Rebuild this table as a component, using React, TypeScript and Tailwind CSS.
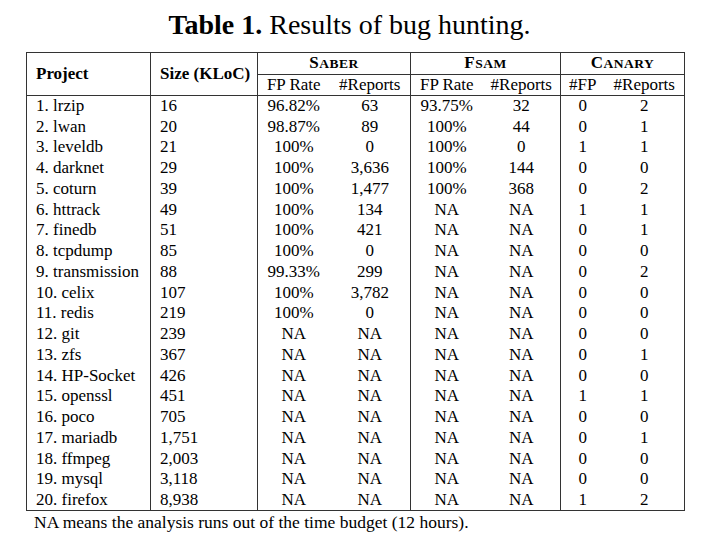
import React from "react";

type Row = [string, string, string, string, string, string, string, string];

const rows: Row[] = [
  ["1. lrzip", "16", "96.82%", "63", "93.75%", "32", "0", "2"],
  ["2. lwan", "20", "98.87%", "89", "100%", "44", "0", "1"],
  ["3. leveldb", "21", "100%", "0", "100%", "0", "1", "1"],
  ["4. darknet", "29", "100%", "3,636", "100%", "144", "0", "0"],
  ["5. coturn", "39", "100%", "1,477", "100%", "368", "0", "2"],
  ["6. httrack", "49", "100%", "134", "NA", "NA", "1", "1"],
  ["7. finedb", "51", "100%", "421", "NA", "NA", "0", "1"],
  ["8. tcpdump", "85", "100%", "0", "NA", "NA", "0", "0"],
  ["9. transmission", "88", "99.33%", "299", "NA", "NA", "0", "2"],
  ["10. celix", "107", "100%", "3,782", "NA", "NA", "0", "0"],
  ["11. redis", "219", "100%", "0", "NA", "NA", "0", "0"],
  ["12. git", "239", "NA", "NA", "NA", "NA", "0", "0"],
  ["13. zfs", "367", "NA", "NA", "NA", "NA", "0", "1"],
  ["14. HP-Socket", "426", "NA", "NA", "NA", "NA", "0", "0"],
  ["15. openssl", "451", "NA", "NA", "NA", "NA", "1", "1"],
  ["16. poco", "705", "NA", "NA", "NA", "NA", "0", "0"],
  ["17. mariadb", "1,751", "NA", "NA", "NA", "NA", "0", "1"],
  ["18. ffmpeg", "2,003", "NA", "NA", "NA", "NA", "0", "0"],
  ["19. mysql", "3,118", "NA", "NA", "NA", "NA", "0", "0"],
  ["20. firefox", "8,938", "NA", "NA", "NA", "NA", "1", "2"],
];

// small caps drawn by hand: first letter full size, rest uppercase and smaller
const Caps: React.FC<{ text: string }> = ({ text }) => (
  <span className="tracking-[0.5px]">
    {text[0]}
    <span className="text-[13.5px] uppercase">{text.slice(1)}</span>
  </span>
);

const App: React.FC = () => {
  return (
    <div className="w-[710px] h-[554px] bg-white text-black font-['Liberation_Serif',serif]">
      <div className="pt-[8px] pr-[11px] text-center text-[28px] leading-[34px]">
        <span className="font-bold">Table 1.</span> Results of bug hunting.
      </div>
      <div className="pl-[26px] pt-[10px]">
        <table className="table-fixed border-collapse w-[658px] text-[17px] leading-[20px] border border-[#333]">
          <colgroup>
            <col className="w-[124px]" />
            <col className="w-[107px]" />
            <col className="w-[72px]" />
            <col className="w-[81px]" />
            <col className="w-[72px]" />
            <col className="w-[78px]" />
            <col className="w-[44px]" />
            <col className="w-[80px]" />
          </colgroup>
          <thead>
            <tr className="h-[20px]">
              <th rowSpan={2} className="text-left font-bold pl-[9px] border-r border-b border-[#333]">
                Project
              </th>
              <th rowSpan={2} className="text-left font-bold pl-[9px] border-r border-b border-[#333]">
                Size (KLoC)
              </th>
              <th colSpan={2} className="font-bold border-r border-b border-[#333]">
                <Caps text="Saber" />
              </th>
              <th colSpan={2} className="font-bold border-r border-b border-[#333]">
                <Caps text="Fsam" />
              </th>
              <th colSpan={2} className="font-bold border-b border-[#333]">
                <Caps text="Canary" />
              </th>
            </tr>
            <tr className="h-[20px] border-b border-[#333]">
              <th className="font-normal">FP Rate</th>
              <th className="font-normal border-r border-[#333]">#Reports</th>
              <th className="font-normal">FP Rate</th>
              <th className="font-normal border-r border-[#333]">#Reports</th>
              <th className="font-normal">#FP</th>
              <th className="font-normal">#Reports</th>
            </tr>
          </thead>
          <tbody>
            {rows.map((r) => (
              <tr key={r[0]} className="h-[20.75px]">
                <td className="pl-[9px] border-r border-[#333] whitespace-nowrap">{r[0]}</td>
                <td className="pl-[9px] border-r border-[#333]">{r[1]}</td>
                <td className="text-center">{r[2]}</td>
                <td className="text-center border-r border-[#333]">{r[3]}</td>
                <td className="text-center">{r[4]}</td>
                <td className="text-center border-r border-[#333]">{r[5]}</td>
                <td className="text-center">{r[6]}</td>
                <td className="text-center">{r[7]}</td>
              </tr>
            ))}
          </tbody>
        </table>
        <div className="pl-[8px] text-[17.5px] leading-[22px]">
          NA means the analysis runs out of the time budget (12 hours).
        </div>
      </div>
    </div>
  );
};

export default App;
